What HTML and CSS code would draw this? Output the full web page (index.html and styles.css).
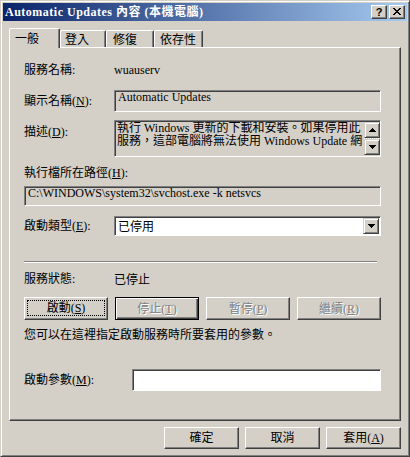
FILE: index.html
```html
<!DOCTYPE html>
<html>
<head>
<meta charset="utf-8">
<title>Automatic Updates 內容</title>
<link rel="stylesheet" href="styles.css">
</head>
<body>
<div class="window">
  <div class="titlebar">
    <span class="title">Automatic Updates 內容 (本機電腦)</span>
    <div class="tbtns">
      <span class="tbtn help">?</span>
      <span class="tbtn close"><svg width="8" height="7" viewBox="0 0 8 7" shape-rendering="crispEdges"><path fill="#000" d="M0 0h2v1H0zM6 0h2v1H6zM1 1h2v1H1zM5 1h2v1H5zM2 2h4v1H2zM3 3h2v1H3zM2 4h4v1H2zM1 5h2v1H1zM5 5h2v1H5zM0 6h2v1H0zM6 6h2v1H6z"/></svg></span>
    </div>
  </div>

  <div class="tabs">
    <div class="tab active">一般</div>
    <div class="tab t2">登入</div>
    <div class="tab t3">修復</div>
    <div class="tab t4">依存性</div>
  </div>

  <div class="panel">
    <div class="row r1">
      <span class="lab">服務名稱:</span>
      <span class="val">wuauserv</span>
    </div>
    <div class="row r2">
      <span class="lab">顯示名稱(<u>N</u>):</span>
      <div class="field f-name">Automatic Updates</div>
    </div>
    <div class="row r3">
      <span class="lab lab-top">描述(<u>D</u>):</span>
      <div class="field f-desc">
        <div class="desc-text"><div class="dline">執行 Windows 更新的下載和安裝。如果停用此</div><div class="dline">服務，這部電腦將無法使用 Windows Update 網</div></div>
        <div class="vscroll">
          <span class="sbtn"><svg width="7" height="4" viewBox="0 0 7 4" shape-rendering="crispEdges"><path fill="#000" d="M3 0h1v1H3zM2 1h3v1H2zM1 2h5v1H1zM0 3h7v1H0z"/></svg></span>
          <span class="track"></span>
          <span class="sbtn"><svg width="7" height="4" viewBox="0 0 7 4" shape-rendering="crispEdges"><path fill="#000" d="M0 0h7v1H0zM1 1h5v1H1zM2 2h3v1H2zM3 3h1v1H3z"/></svg></span>
        </div>
      </div>
    </div>
    <div class="row r4">
      <span class="lab">執行檔所在路徑(<u>H</u>):</span>
    </div>
    <div class="row r5">
      <div class="field f-path">C:\WINDOWS\system32\svchost.exe -k netsvcs</div>
    </div>
    <div class="row r6">
      <span class="lab">啟動類型(<u>E</u>):</span>
      <div class="combo">
        <span class="combo-text">已停用</span>
        <span class="sbtn drop"><svg width="7" height="4" viewBox="0 0 7 4" shape-rendering="crispEdges"><path fill="#000" d="M0 0h7v1H0zM1 1h5v1H1zM2 2h3v1H2zM3 3h1v1H3z"/></svg></span>
      </div>
    </div>
    <div class="sep"></div>
    <div class="row r7">
      <span class="lab">服務狀態:</span>
      <span class="val cjk">已停止</span>
    </div>
    <div class="btnrow">
      <div class="btn focus"><span class="focusrect">啟動(<u>S</u>)</span></div>
      <div class="btn default disabled">停止(<u>T</u>)</div>
      <div class="btn disabled">暫停(<u>P</u>)</div>
      <div class="btn disabled">繼續(<u>R</u>)</div>
    </div>
    <div class="row r8">
      <span class="info">您可以在這裡指定啟動服務時所要套用的參數。</span>
    </div>
    <div class="row r9">
      <span class="lab lab-wide">啟動參數(<u>M</u>):</span>
      <div class="field f-param"></div>
    </div>
  </div>

  <div class="footer">
    <div class="btn fbtn">確定</div>
    <div class="btn fbtn">取消</div>
    <div class="btn fbtn">套用(<u>A</u>)</div>
  </div>
</div>
</body>
</html>
```

FILE: styles.css
```css
* { box-sizing: border-box; }
html, body { margin: 0; padding: 0; }
body {
  width: 410px;
  height: 457px;
  overflow: hidden;
  background: #D4D0C8;
  color: #000;
  font-family: "Liberation Serif", "Noto Sans CJK TC", serif;
  font-size: 12px;
  line-height: 16px;
}
u { text-decoration: underline; text-underline-offset: 1px; }

.window {
  width: 410px;
  height: 457px;
  background: #D4D0C8;
  border: 1px solid;
  border-color: #D4D0C8 #404040 #404040 #D4D0C8;
  box-shadow: inset 1px 1px #fff, inset -1px -1px #808080;
  padding: 2px;
  display: flex;
  flex-direction: column;
}

/* title bar */
.titlebar {
  height: 18px;
  flex: none;
  display: flex;
  align-items: center;
  justify-content: space-between;
  padding: 0 2px;
  background: linear-gradient(to right, #0A246A, #A6CAF0);
}
.title {
  color: #fff;
  font-weight: bold;
  font-size: 12px;
  line-height: 18px;
  letter-spacing: 0.5px;
  white-space: nowrap;
}
.tbtns { display: flex; gap: 2px; }
.tbtn {
  width: 16px;
  height: 14px;
  background: #D4D0C8;
  border: 1px solid;
  border-color: #fff #404040 #404040 #fff;
  box-shadow: inset -1px -1px #808080;
  display: flex;
  align-items: center;
  justify-content: center;
}
.help {
  font-family: "Liberation Sans", sans-serif;
  font-weight: bold;
  font-size: 11px;
  line-height: 12px;
  padding-bottom: 1px;
}
.close svg { display: block; margin-bottom: 1px; }

/* tabs */
.tabs {
  flex: none;
  display: flex;
  align-items: flex-end;
  height: 20px;
  margin: 7px 0 0 6px;
  position: relative;
  z-index: 1;
}
.tab {
  height: 17px;
  margin-bottom: 1px;
  border: 1px solid;
  border-bottom: none;
  border-color: #fff #404040 transparent #fff;
  box-shadow: inset -1px 0 #808080;
  border-radius: 2px 2px 0 0;
  background: #D4D0C8;
  font-family: "Noto Sans CJK TC", sans-serif;
  line-height: 16px;
  padding-left: 4px;
  white-space: nowrap;
}
.tab.active { height: 20px; margin-bottom: 0; width: 51px; padding-left: 5px; padding-top: 1px; }
.t2 { width: 46px; }
.t3 { width: 48px; padding-left: 6px; }
.t4 { width: 49px; padding-left: 5px; }

/* panel */
.panel {
  flex: none;
  height: 374px;
  margin: -1px 6px 0 6px;
  border: 1px solid;
  border-color: #fff #404040 #404040 #fff;
  box-shadow: inset -1px -1px #808080;
  padding: 0 19px 0 14px;
}
.row { display: flex; align-items: center; }
.lab { width: 90px; flex: none; white-space: nowrap; }
.lab-wide { width: 108px; }
.lab-top { align-self: flex-start; padding-top: 4px; }
.val { white-space: nowrap; }
.cjk { font-family: "Noto Sans CJK TC", sans-serif; }

.r1 { height: 16px; margin-top: 14px; }
.r2 { height: 22px; margin-top: 12px; }
.r3 { height: 37px; margin-top: 8px; align-items: flex-start; }
.r4 { height: 16px; margin-top: 8px; }
.r5 { height: 20px; margin-top: 5px; }
.r6 { height: 20px; margin-top: 10px; }
.r7 { height: 16px; margin-top: 8px; }
.r8 { height: 16px; margin-top: 7px; }
.r9 { height: 22px; margin-top: 26px; }

.field {
  flex: 1;
  align-self: stretch;
  border: 1px solid;
  border-color: #808080 #fff #fff #808080;
  box-shadow: inset 1px 1px #404040;
  background: #D4D0C8;
  padding: 0 3px;
  line-height: 12px;
  white-space: nowrap;
  overflow: hidden;
}
.f-param { background: #fff; }
.f-desc {
  display: flex;
  padding: 1px 0 1px 2px;
}
.desc-text {
  flex: 1;
  overflow: hidden;
}
.dline { height: 13px; line-height: 13px; }
.vscroll {
  width: 16px;
  flex: none;
  display: flex;
  flex-direction: column;
}
.track {
  flex: 1;
  background-color: #fff;
  background-image:
    linear-gradient(45deg, #D4D0C8 25%, transparent 25%, transparent 75%, #D4D0C8 75%),
    linear-gradient(45deg, #D4D0C8 25%, transparent 25%, transparent 75%, #D4D0C8 75%);
  background-size: 2px 2px;
  background-position: 0 0, 1px 1px;
}
.sbtn {
  width: 16px;
  height: 16px;
  flex: none;
  background: #D4D0C8;
  border: 1px solid;
  border-color: #D4D0C8 #404040 #404040 #D4D0C8;
  box-shadow: inset 1px 1px #fff, inset -1px -1px #808080;
  display: flex;
  align-items: center;
  justify-content: center;
}
.sbtn svg { display: block; }

.combo {
  flex: 1;
  align-self: stretch;
  display: flex;
  align-items: center;
  border: 1px solid;
  border-color: #808080 #fff #fff #808080;
  box-shadow: inset 1px 1px #404040;
  background: #fff;
  padding: 1px;
}
.combo-text {
  flex: 1;
  font-family: "Noto Sans CJK TC", sans-serif;
  padding-left: 2px;
  line-height: 16px;
}

.sep {
  height: 2px;
  margin-top: 25px;
  margin-right: 4px;
  border-top: 1px solid #808080;
  border-bottom: 1px solid #fff;
}

/* buttons */
.btnrow {
  display: grid;
  grid-template-columns: repeat(4, 1fr);
  gap: 7px;
  margin-top: 10px;
}
.btn {
  height: 23px;
  background: #D4D0C8;
  border: 1px solid;
  border-color: #fff #404040 #404040 #fff;
  box-shadow: inset -1px -1px #808080;
  display: flex;
  align-items: center;
  justify-content: center;
  font-family: "Liberation Serif", "Noto Sans CJK TC", serif;
  line-height: 16px;
  white-space: nowrap;
}
.btn.default {
  border-color: #000;
  box-shadow: inset 1px 1px #fff, inset -1px -1px #404040, inset -2px -2px #808080;
}
.btn.disabled { color: #808080; text-shadow: 1px 1px #fff; }
.btn.focus { padding: 2px 2px 3px 2px; }
.focusrect {
  flex: 1;
  align-self: stretch;
  border: 1px dotted #000;
  display: flex;
  align-items: center;
  justify-content: center;
}

.info { white-space: nowrap; }

.footer {
  flex: none;
  display: flex;
  justify-content: flex-end;
  gap: 6px;
  margin-top: 6px;
  padding-right: 6px;
}
.fbtn { width: 75px; height: 22px; }
```
